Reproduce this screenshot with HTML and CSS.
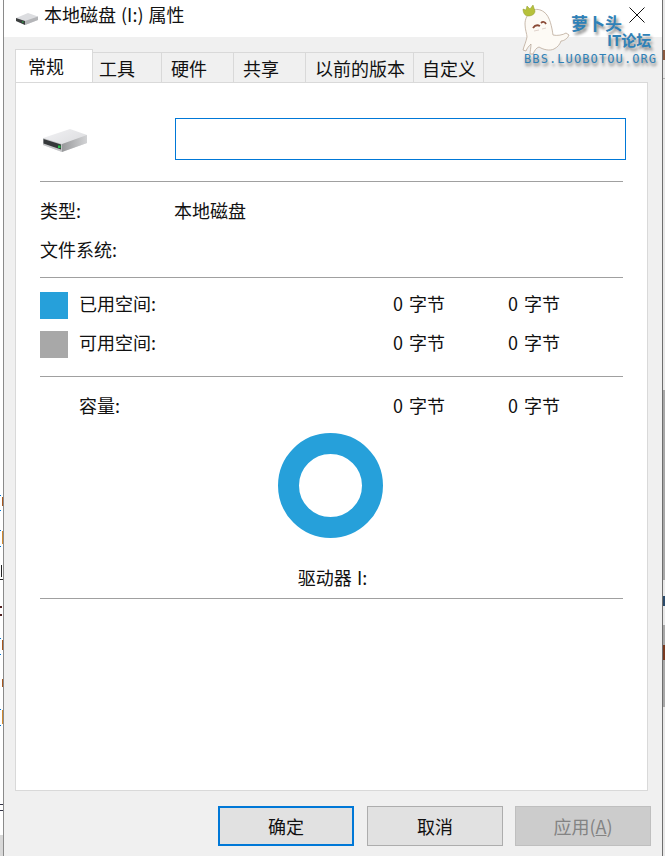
FILE: index.html
```html
<!DOCTYPE html>
<html>
  <head>
    <title>本地磁盘 (I:) 属性</title>
    <meta charset="utf-8" />
    <link rel="stylesheet" href="styles.css">
  </head>
  <body>
    <div class="desk">
      <div class="edge edge-left"></div>
      <div class="win">
        <div class="titlebar">
          <svg class="drive-small" viewBox="0 0 22 12">
            <path d="M0 5 L12 0 L22 3.500 L22 7 L9 12 L0 8 Z" fill="#dcdde0"/>
            <path d="M0 5 L9 8 L9 12 L0 8 Z" fill="#3c3f3f"/>
            <path d="M9 8 L22 3.500 L22 7 L9 12 Z" fill="#b4b5b8"/>
            <rect x="6" y="8.500" width="1.500" height="1" fill="#27c24a"/>
          </svg>
          <span class="title">本地磁盘 (I:) 属性</span>
          <svg class="close" viewBox="0 0 16 16">
            <path d="M0.5 0.5 L15.5 15.5 M15.5 0.5 L0.5 15.5" stroke="#111" stroke-width="1" fill="none"/>
          </svg>
        </div>
        <div class="body">
          <div class="tabs">
            <div class="tab active">常规</div>
            <div class="tab t-tools">工具</div>
            <div class="tab t-hw">硬件</div>
            <div class="tab t-share">共享</div>
            <div class="tab t-prev">以前的版本</div>
            <div class="tab t-custom">自定义</div>
          </div>
          <div class="panel">
            <div class="head-row">
              <svg class="drive" viewBox="0 0 46 24">
                <defs>
                  <linearGradient id="top" x1="0" y1="0" x2="1" y2="1">
                    <stop offset="0" stop-color="#f2f2f4"/>
                    <stop offset="1" stop-color="#d6d7da"/>
                  </linearGradient>
                  <linearGradient id="side" x1="0" y1="0" x2="1" y2="0">
                    <stop offset="0" stop-color="#98999b"/>
                    <stop offset="1" stop-color="#d2d3d5"/>
                  </linearGradient>
                </defs>
                <path d="M0 9 L27 0 L44 6 L44 14 L19 23 L0 16 Z" fill="url(#top)"/>
                <path d="M0 9 L19 15 L19 23 L0 16 Z" fill="#c3c4c6"/>
                <path d="M0.500 10 L18 15.500 L18 20.500 L0.500 14.500 Z" fill="#35383a"/>
                <path d="M19 15 L44 6 L44 14 L19 23 Z" fill="url(#side)"/>
                <rect x="15" y="16.500" width="2.500" height="2.500" fill="#27c24a"/>
              </svg>
              <div class="name-box"></div>
            </div>
            <hr class="sep sep-a">
            <div class="row row-type"><span class="key">类型:</span><span>本地磁盘</span></div>
            <div class="row row-fs"><span class="key">文件系统:</span></div>
            <hr class="sep sep-b">
            <div class="usage used">
              <i class="swatch blue"></i><span class="ukey">已用空间:</span>
              <span class="bytes">0 字节</span><span class="gb">0 字节</span>
            </div>
            <div class="usage free">
              <i class="swatch gray"></i><span class="ukey">可用空间:</span>
              <span class="bytes">0 字节</span><span class="gb">0 字节</span>
            </div>
            <hr class="sep sep-c">
            <div class="usage cap">
              <i class="swatch none"></i><span class="ukey">容量:</span>
              <span class="bytes">0 字节</span><span class="gb">0 字节</span>
            </div>
            <div class="ring-wrap"><div class="ring"></div></div>
            <div class="drive-label">驱动器 I:</div>
            <hr class="sep sep-d">
          </div>
          <div class="buttons">
            <div class="btn default">确定</div>
            <div class="btn">取消</div>
            <div class="btn disabled">应用(<u>A</u>)</div>
          </div>
        </div>
      </div>
      <div class="edge edge-right"></div>
    </div>

    <!-- 论坛水印 -->
    <div class="mark">
      <svg class="mascot" viewBox="0 0 50 52">
        <path d="M11 6 C5 10 3 15 3 20 C3 26 5 30 5 33 C4 38 2 42 1 46 L4 47 C5 44 7 42 9 40 C9 44 8 47 8 50 L11 50 C13 46 14 44 17 43 C22 46 28 47 32 45 C36 43 38 40 39 37 C42 37 46 34 47 31 L44 29 C41 31 35 32 31 31 C30 24 28 12 22 8 C18 5 14 5 11 6 Z" fill="#fdfaf5" stroke="#bba999" stroke-width="0.800"/>
        <path d="M1 5 L4 6 L5 2 L8 5 L11 1 L13 7 C13 10 10 12 6 12 C3 12 1 9 1 5 Z" fill="#b7c13a" stroke="#8f9a2c" stroke-width="0.500"/>
        <path d="M11 24 C13 21 16 21 18 22 M19 19 C21 17 23 18 24 20" stroke="#8a4a36" stroke-width="1.800" fill="none"/>
        <path d="M12 27 L17 26 M20 25 L24 24" stroke="#d8c8c0" stroke-width="0.800" fill="none"/>
      </svg>
      <span class="mark-cn">萝卜头</span>
      <span class="mark-it">IT论坛</span>
      <span class="mark-url">BBS.LUOBOTOU.ORG</span>
    </div>
  </body>
</html>
```

FILE: styles.css
```css
html, body {
  margin: 0;
  height: 100%;
  overflow: hidden;
}
body {
  font-family: "Noto Sans CJK SC", "Noto Sans", sans-serif;
  font-size: 18px;
  color: #111;
  background: #f0f0f0;
}
hr {
  border: 0;
  margin: 0;
}
.desk {
  display: flex;
  height: 856px;
}
.edge {
  flex: none;
}
/* 窗口后面露出来的一点桌面 */
.edge-left {
  width: 3px;
  background:
    linear-gradient(#a8581f, #a8581f) 2px 497px / 1px 9px no-repeat,
    linear-gradient(#0078d7, #0078d7) 0 495px / 1px 1px no-repeat,
    linear-gradient(#0078d7, #0078d7) 0 510px / 1px 1px no-repeat,
    linear-gradient(#d08a30, #d08a30) 2px 531px / 1px 13px no-repeat,
    linear-gradient(#0078d7, #0078d7) 0 530px / 1px 1px no-repeat,
    linear-gradient(#0078d7, #0078d7) 0 546px / 1px 1px no-repeat,
    linear-gradient(#222, #222) 1px 565px / 1px 12px no-repeat,
    linear-gradient(#222, #222) 0 579px / 3px 1px no-repeat,
    linear-gradient(#502020, #502020) 0 606px / 2px 2px no-repeat,
    linear-gradient(#502020, #502020) 0 614px / 2px 2px no-repeat,
    linear-gradient(#0078d7, #0078d7) 0 638px / 1px 1px no-repeat,
    linear-gradient(#a8581f, #a8581f) 2px 640px / 1px 10px no-repeat,
    linear-gradient(#0078d7, #0078d7) 0 654px / 1px 1px no-repeat,
    linear-gradient(#a8581f, #a8581f) 2px 679px / 1px 8px no-repeat,
    linear-gradient(#d08a30, #d08a30) 2px 710px / 1px 14px no-repeat,
    linear-gradient(#0078d7, #0078d7) 0 709px / 1px 1px no-repeat,
    linear-gradient(#0078d7, #0078d7) 0 725px / 1px 1px no-repeat,
    linear-gradient(#334, #334) 0 804px / 3px 1px no-repeat,
    linear-gradient(#334, #334) 0 810px / 3px 1px no-repeat,
    linear-gradient(#d8d8d8, #d8d8d8) 0 835px / 3px 21px no-repeat,
    #fff;
  border-right: 1px solid #8a8a8a;
}
.edge-right {
  width: 3px;
  box-sizing: border-box;
  border-left: 1px solid #6e6e6e;
  background:
    linear-gradient(#8a5a40, #8a5a40) 0 50px / 2px 10px no-repeat,
    linear-gradient(#b0b0b0, #b0b0b0) 0 78px / 2px 1px no-repeat,
    linear-gradient(#2a4a6a, #2a4a6a) 0 596px / 2px 10px no-repeat,
    linear-gradient(#7a3a20, #7a3a20) 0 645px / 2px 15px no-repeat,
    linear-gradient(#a8a8a8, #a8a8a8) 0 625px / 2px 82px no-repeat,
    linear-gradient(#a8a8a8, #a8a8a8) 0 390px / 2px 190px no-repeat,
    #e8e8e8;
}
.win {
  flex: 1;
  display: flex;
  flex-direction: column;
  min-width: 0;
}
.titlebar {
  height: 37px;
  flex: none;
  background: #fff;
  display: flex;
  align-items: flex-start;
  padding: 0 17px 0 12px;
}
.drive-small {
  width: 22px;
  height: 12px;
  margin-top: 13px;
}
.title {
  margin-left: 6px;
  line-height: 29px;
  word-spacing: 1px;
}
.close {
  width: 16px;
  height: 16px;
  margin-left: auto;
  margin-top: 7px;
}
.body {
  flex: 1;
  background: #f0f0f0;
  padding: 12px 14px 0 11px;
}
.tabs {
  display: flex;
  height: 33px;
  align-items: flex-end;
  position: relative;
  z-index: 1;
}
.tab {
  height: 30px;
  box-sizing: border-box;
  border: 1px solid #d9d9d9;
  border-left: 0;
  border-bottom: 0;
  line-height: 31px;
}
.tab.active {
  height: 33px;
  width: 78px;
  background: #fff;
  border-left: 1px solid #d9d9d9;
  line-height: 32px;
  padding-left: 12px;
}
.t-tools { width: 69px; padding-left: 6px; }
.t-hw { width: 72px; padding-left: 9px; }
.t-share { width: 72px; padding-left: 9px; }
.t-prev { width: 108px; padding-left: 9px; }
.t-custom { width: 70px; padding-left: 8px; }
.panel {
  height: 709px;
  box-sizing: border-box;
  background: #fff;
  border: 1px solid #d9d9d9;
  padding: 35px 24px 0 24px;
}
.head-row {
  display: flex;
  align-items: center;
  height: 42px;
}
.drive {
  width: 46px;
  height: 24px;
  margin: 3px 0 0 3px;
  flex: none;
}
.name-box {
  flex: none;
  box-sizing: border-box;
  width: 451px;
  height: 42px;
  margin-left: 86px;
  border: 1px solid #0078d7;
}
.sep {
  height: 1px;
  background: #a0a0a0;
}
.sep-a { margin-top: 21px; }
.row {
  display: flex;
  line-height: 26px;
}
.row-type { margin-top: 15px; }
.row-fs { margin-top: 13px; }
.key {
  width: 135px;
}
.row span + span {
  margin-left: -1px;
}
.sep-b { margin-top: 15px; }
.usage {
  display: flex;
  align-items: flex-start;
  height: 27px;
  line-height: 22px;
  word-spacing: 2px;
}
.used { margin-top: 14px; }
.free { margin-top: 12px; }
.sep-c { margin-top: 18px; }
.cap { margin-top: 17px; }
.swatch {
  width: 28px;
  height: 27px;
  flex: none;
}
.blue { background: #26a0da; }
.gray { background: #a8a8a8; }
.ukey {
  width: 314px;
  margin-left: 11px;
}
.bytes {
  width: 115px;
}
.ring-wrap {
  display: flex;
  justify-content: center;
  margin-top: 12px;
}
.ring {
  box-sizing: border-box;
  width: 105px;
  height: 105px;
  margin-left: -3px;
  border-radius: 50%;
  border: 21px solid #26a0da;
}
.drive-label {
  text-align: center;
  line-height: 26px;
  margin-top: 26px;
  margin-left: 2px;
  word-spacing: 1px;
}
.sep-d { margin-top: 8px; }
.buttons {
  display: flex;
  gap: 13px;
  justify-content: flex-end;
  margin-top: 15px;
  margin-right: -3px;
}
.btn {
  width: 136px;
  height: 40px;
  box-sizing: border-box;
  background: #e1e1e1;
  border: 1px solid #adadad;
  text-align: center;
  line-height: 39px;
}
.btn.default {
  border: 2px solid #0078d7;
  line-height: 37px;
}
.btn.disabled {
  margin-left: -1px;
  background: #cccccc;
  border-color: #bfbfbf;
  color: #838383;
}

/* 右上角的论坛水印，压在窗口上面 */
.mark {
  position: absolute;
  left: 520px;
  top: 2px;
  width: 142px;
  height: 66px;
}
.mascot {
  position: absolute;
  left: 2px;
  top: 2px;
  width: 50px;
  height: 52px;
}
.mark-cn, .mark-it, .mark-url {
  position: absolute;
  color: #2f81b7;
  font-weight: 700;
  white-space: nowrap;
  text-shadow: 2px 3px 3px #8a8a8a;
}
.mark-cn {
  left: 51px;
  top: 9px;
  font-size: 17px;
  line-height: 24px;
}
.mark-it {
  left: 87px;
  top: 28px;
  font-size: 15px;
  line-height: 20px;
}
.mark-url {
  left: 4px;
  top: 49px;
  font-family: "DejaVu Sans Mono", monospace;
  font-size: 12px;
  font-weight: 400;
  line-height: 16px;
  letter-spacing: 1.100px;
  text-shadow: 1px 3px 3px #777;
}
```
